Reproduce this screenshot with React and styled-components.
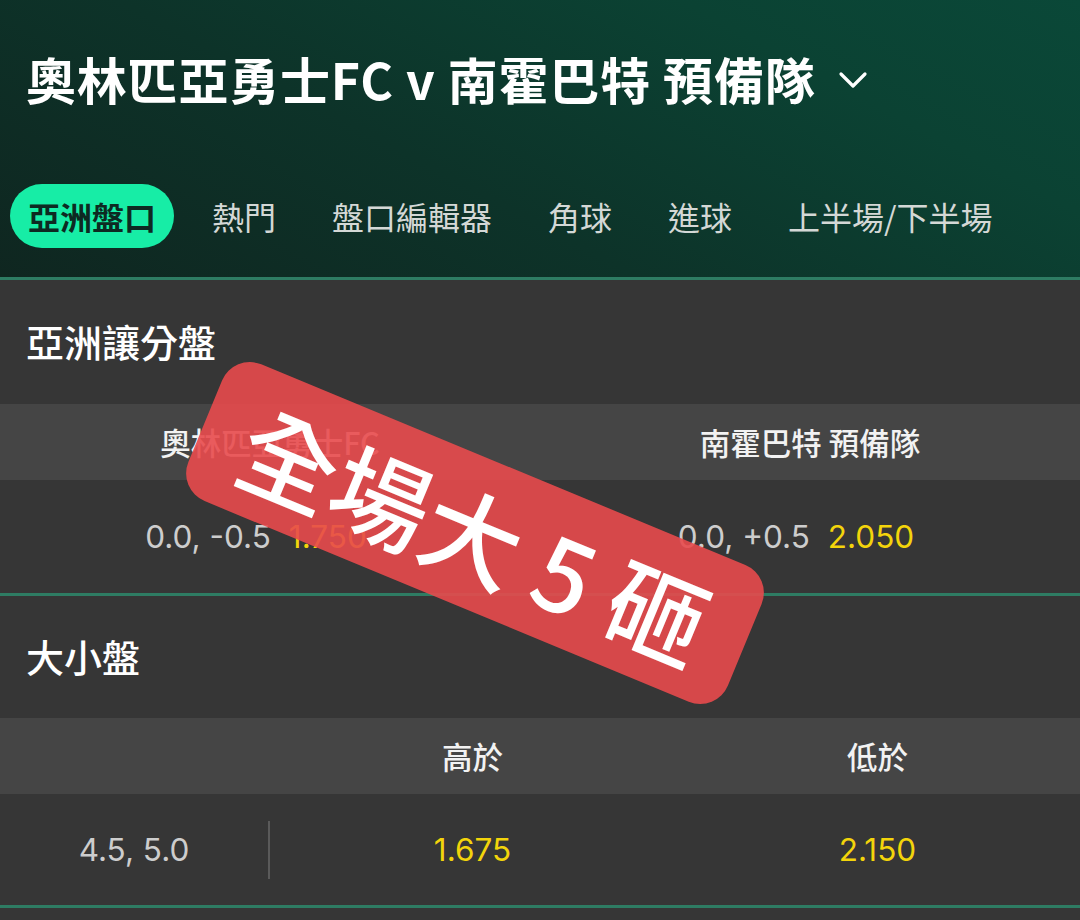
import React from "react";
import styled, { createGlobalStyle } from "styled-components";

const Global = createGlobalStyle`
  html, body { margin: 0; padding: 0; background: #363636; }
  body { font-family: Inter, "Noto Sans CJK TC", "Noto Sans", sans-serif; }
  * { box-sizing: border-box; }
`;

const Page = styled.div`
  position: relative;
  width: 1080px;
  height: 920px;
  overflow: hidden;
  background: #363636;
`;

const Header = styled.header`
  height: 277px;
  background: linear-gradient(28deg, #0f2620 0%, #0d3329 40%, #0b4233 75%, #0a4838 100%);
  display: flex;
  flex-direction: column;
`;

const TitleRow = styled.div`
  display: flex;
  align-items: center;
  gap: 22px;
  padding: 46px 0 0 26px;
  height: 110px;
`;

const Title = styled.h1`
  margin: 0;
  font-family: "Noto Sans CJK TC", sans-serif;
  font-weight: 700;
  font-size: 50px;
  line-height: 62px;
  color: #ffffff;
  letter-spacing: 0.8px;
  white-space: nowrap;
`;

const Chevron = styled.svg`
  width: 30px;
  height: 20px;
  margin-top: 4px;
`;

const Tabs = styled.nav`
  display: flex;
  align-items: center;
  gap: 20px;
  padding: 0 0 0 10px;
  margin-top: 74px;
`;

const Tab = styled.div`
  height: 64px;
  padding: 0 18px;
  border-radius: 32px;
  display: flex;
  align-items: center;
  font-family: "Noto Sans CJK TC", sans-serif;
  font-size: 32px;
  font-weight: ${(p) => (p.$active ? 700 : 400)};
  color: ${(p) => (p.$active ? "#0d2a22" : "#d4d8d6")};
  background: ${(p) => (p.$active ? "#17eda6" : "transparent")};
  white-space: nowrap;
`;

const Divider = styled.div`
  height: 3px;
  background: #2e7c63;
`;

const SectionTitle = styled.div`
  height: ${(p) => p.$h}px;
  display: flex;
  align-items: center;
  padding: 0 0 4px 26px;
  font-family: "Noto Sans CJK TC", sans-serif;
  font-size: 38px;
  font-weight: 500;
  color: #ffffff;
`;

const HeadRow = styled.div`
  height: 76px;
  background: #454545;
  display: grid;
  grid-template-columns: ${(p) => p.$cols};
  align-items: center;
`;

const HeadCell = styled.div`
  text-align: center;
  font-family: "Noto Sans CJK TC", sans-serif;
  font-size: 30.5px;
  font-weight: 500;
  color: #f2f2f2;
`;

const OddsRow = styled.div`
  height: ${(p) => p.$h}px;
  display: grid;
  grid-template-columns: ${(p) => p.$cols};
  align-items: center;
`;

const OddsCell = styled.div`
  display: flex;
  justify-content: center;
  align-items: center;
  gap: 18px;
  padding-right: ${(p) => p.$pr || 0}px;
  font-family: Inter, "Noto Sans CJK TC", sans-serif;
  font-size: 31.5px;
  font-weight: 400;
  height: 100%;
  ${(p) => (p.$sep ? "border-right: 2px solid #5a5a5a; height: 58px;" : "")}
`;

const Line = styled.span`
  color: #cdcdcd;
`;

const Price = styled.span`
  color: #f3d40b;
`;

const Sticker = styled.div`
  position: absolute;
  left: 183px;
  top: 459px;
  width: 584px;
  height: 148px;
  border-radius: 30px;
  background: rgba(232, 74, 76, 0.9);
  transform: rotate(22.5deg);
  display: flex;
  align-items: center;
  justify-content: center;
  font-family: "Noto Sans CJK TC", sans-serif;
  font-size: 99px;
  font-weight: 500;
  color: #ffffff;
  white-space: pre;
  line-height: 1;
`;

export default function App() {
  return (
    <Page>
      <Global />
      <Header>
        <TitleRow>
          <Title>奧林匹亞勇士FC v 南霍巴特 預備隊</Title>
          <Chevron viewBox="0 0 30 20">
            <path d="M3 4 L15 16 L27 4" fill="none" stroke="#ffffff" strokeWidth="3.2" strokeLinecap="round" strokeLinejoin="round" />
          </Chevron>
        </TitleRow>
        <Tabs>
          <Tab $active>亞洲盤口</Tab>
          <Tab>熱門</Tab>
          <Tab>盤口編輯器</Tab>
          <Tab>角球</Tab>
          <Tab>進球</Tab>
          <Tab>上半場/下半場</Tab>
        </Tabs>
      </Header>
      <Divider />

      <SectionTitle $h={124}>亞洲讓分盤</SectionTitle>
      <HeadRow $cols="1fr 1fr">
        <HeadCell>奧林匹亞勇士FC</HeadCell>
        <HeadCell>南霍巴特 預備隊</HeadCell>
      </HeadRow>
      <OddsRow $cols="1fr 1fr" $h={113}>
        <OddsCell $pr={28}>
          <Line>0.0, -0.5</Line>
          <Price>1.750</Price>
        </OddsCell>
        <OddsCell $pr={28}>
          <Line>0.0, +0.5</Line>
          <Price>2.050</Price>
        </OddsCell>
      </OddsRow>
      <Divider />

      <SectionTitle $h={122}>大小盤</SectionTitle>
      <HeadRow $cols="270px 1fr 1fr">
        <HeadCell />
        <HeadCell>高於</HeadCell>
        <HeadCell>低於</HeadCell>
      </HeadRow>
      <OddsRow $cols="270px 1fr 1fr" $h={111}>
        <OddsCell $sep>
          <Line>4.5, 5.0</Line>
        </OddsCell>
        <OddsCell>
          <Price>1.675</Price>
        </OddsCell>
        <OddsCell>
          <Price>2.150</Price>
        </OddsCell>
      </OddsRow>
      <Divider />

      <Sticker>{"全場大 5 砸"}</Sticker>
    </Page>
  );
}
